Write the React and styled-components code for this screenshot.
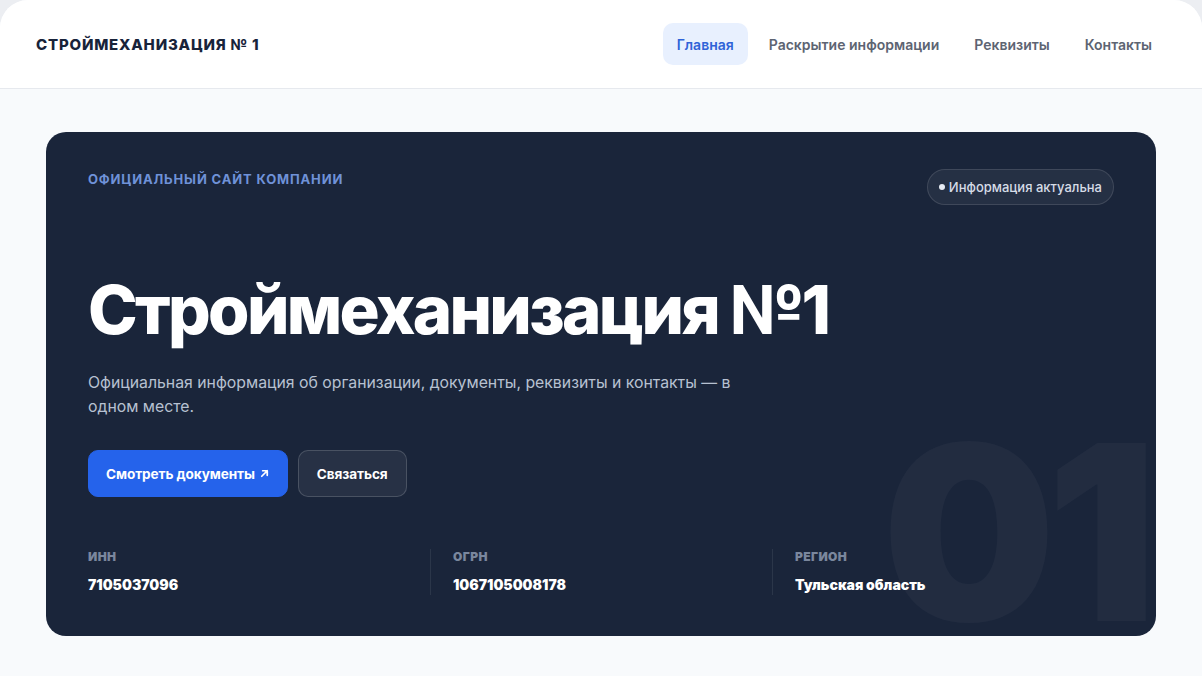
import React from "react";
import styled, { createGlobalStyle } from "styled-components";

const Global = createGlobalStyle`
  html, body { margin: 0; padding: 0; background: #eceef2; }
  body { font-family: Inter, "Noto Sans", sans-serif; -webkit-font-smoothing: antialiased; }
  * { box-sizing: border-box; }
`;

const Page = styled.div`
  min-height: 676px;
  background: #f8fafc;
  border-radius: 28px 28px 0 0;
  overflow: hidden;
`;

const Header = styled.header`
  height: 89px;
  background: #ffffff;
  border-bottom: 1px solid #e6e9ee;
  display: flex;
  align-items: center;
  justify-content: space-between;
  padding: 0 36px;
`;

const Brand = styled.div`
  font-size: 15px;
  font-weight: 800;
  letter-spacing: 0.8px;
  color: #18233a;
`;

const Nav = styled.nav`
  display: flex;
  align-items: center;
  gap: 7px;
`;

const NavItem = styled.a`
  display: flex;
  align-items: center;
  height: 42px;
  padding: 0 14px;
  border-radius: 10px;
  font-size: 14px;
  font-weight: 600;
  text-decoration: none;
  color: ${(p) => (p.$active ? "#2f63d8" : "#5d6472")};
  background: ${(p) => (p.$active ? "#e8f0fe" : "transparent")};
`;

const Main = styled.main`
  padding: 43px 46px 40px;
`;

const Hero = styled.section`
  position: relative;
  overflow: hidden;
  height: 504px;
  background: #1a253a;
  border-radius: 20px;
  padding: 38px 42px 0;
  display: flex;
  flex-direction: column;
`;

const Watermark = styled.div`
  position: absolute;
  right: 8px;
  bottom: -19px;
  font-size: 244px;
  font-weight: 900;
  line-height: 1;
  letter-spacing: -9px;
  color: rgba(255, 255, 255, 0.035);
  pointer-events: none;
  user-select: none;
`;

const TopRow = styled.div`
  position: relative;
  display: flex;
  justify-content: space-between;
  align-items: flex-start;
`;

const Eyebrow = styled.div`
  font-size: 13px;
  font-weight: 700;
  letter-spacing: 0.85px;
  color: #6f92d8;
  line-height: 18px;
`;

const Badge = styled.div`
  margin-top: -1px;
  height: 36px;
  padding: 0 11px;
  display: flex;
  align-items: center;
  gap: 4px;
  border-radius: 18px;
  border: 1px solid rgba(255, 255, 255, 0.12);
  background: rgba(255, 255, 255, 0.05);
  font-size: 13px;
  font-weight: 500;
  color: #d6dce7;
`;

const Dot = styled.span`
  width: 6px;
  height: 6px;
  border-radius: 50%;
  background: #e6ebf3;
`;

const Title = styled.h1`
  position: relative;
  margin: 71px 0 0;
  font-size: 67px;
  font-weight: 800;
  letter-spacing: -2.7px;
  line-height: 1;
  color: #ffffff;
`;

const Lead = styled.p`
  position: relative;
  margin: 28px 0 0;
  max-width: 660px;
  font-size: 15.8px;
  line-height: 24px;
  color: #b7c1d1;
`;

const Actions = styled.div`
  position: relative;
  display: flex;
  gap: 10px;
  margin-top: 31px;
`;

const Button = styled.a`
  height: 47px;
  display: flex;
  align-items: center;
  gap: 4px;
  padding: 0 ${(p) => (p.$primary ? "17px" : "18px")};
  border-radius: 10px;
  font-size: 13.6px;
  font-weight: 700;
  letter-spacing: -0.1px;
  color: #ffffff;
  text-decoration: none;
  background: ${(p) => (p.$primary ? "#2563eb" : "rgba(255,255,255,0.06)")};
  border: 1px solid ${(p) => (p.$primary ? "#2563eb" : "rgba(255,255,255,0.16)")};
`;

const Stats = styled.div`
  position: relative;
  margin-top: 52px;
  display: grid;
  grid-template-columns: repeat(3, 1fr);
`;

const Stat = styled.div`
  padding: 0 0 2px ${(p) => (p.$first ? "0" : "22px")};
  border-left: ${(p) => (p.$first ? "none" : "1px solid rgba(255,255,255,0.08)")};
  display: flex;
  flex-direction: column;
  gap: 12px;
`;

const StatLabel = styled.div`
  font-size: 12px;
  font-weight: 900;
  letter-spacing: 0.4px;
  color: #7a879d;
`;

const StatValue = styled.div`
  font-size: 14px;
  font-weight: 900;
  color: #ffffff;
`;

const Arrow = () => (
  <svg width="11" height="11" viewBox="0 0 12 12" fill="none">
    <path d="M3 9L9 3M4 3h5v5" stroke="#fff" strokeWidth="1.9" strokeLinecap="round" strokeLinejoin="round" />
  </svg>
);

export default function App() {
  return (
    <>
      <Global />
      <Page>
        <Header>
          <Brand>СТРОЙМЕХАНИЗАЦИЯ № 1</Brand>
          <Nav>
            <NavItem $active>Главная</NavItem>
            <NavItem>Раскрытие информации</NavItem>
            <NavItem>Реквизиты</NavItem>
            <NavItem>Контакты</NavItem>
          </Nav>
        </Header>
        <Main>
          <Hero>
            <Watermark>01</Watermark>
            <TopRow>
              <Eyebrow>ОФИЦИАЛЬНЫЙ САЙТ КОМПАНИИ</Eyebrow>
              <Badge>
                <Dot />
                Информация актуальна
              </Badge>
            </TopRow>
            <Title>Строймеханизация №1</Title>
            <Lead>
              Официальная информация об организации, документы, реквизиты и контакты — в одном месте.
            </Lead>
            <Actions>
              <Button $primary>
                Смотреть документы <Arrow />
              </Button>
              <Button>Связаться</Button>
            </Actions>
            <Stats>
              <Stat $first>
                <StatLabel>ИНН</StatLabel>
                <StatValue>7105037096</StatValue>
              </Stat>
              <Stat>
                <StatLabel>ОГРН</StatLabel>
                <StatValue>1067105008178</StatValue>
              </Stat>
              <Stat>
                <StatLabel>РЕГИОН</StatLabel>
                <StatValue>Тульская область</StatValue>
              </Stat>
            </Stats>
          </Hero>
        </Main>
      </Page>
    </>
  );
}
